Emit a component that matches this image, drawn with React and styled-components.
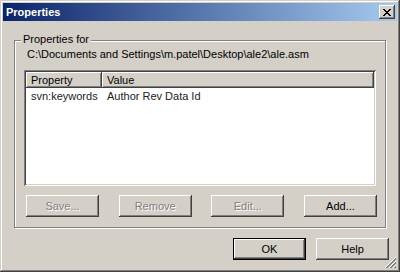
import styled, { createGlobalStyle } from 'styled-components';

const FACE = '#d4d0c8';
const SHADOW = '#808080';
const DARK = '#404040';

const GlobalStyle = createGlobalStyle`
  html, body {
    margin: 0;
    padding: 0;
    background: ${FACE};
  }
  * {
    box-sizing: border-box;
  }
`;

const Window = styled.div`
  position: relative;
  width: 400px;
  height: 272px;
  padding: 3px;
  display: flex;
  flex-direction: column;
  background: ${FACE};
  box-shadow: inset -1px -1px ${DARK}, inset 1px 1px ${FACE},
    inset -2px -2px ${SHADOW}, inset 2px 2px #fff;
  font-family: 'Liberation Sans', Arial, sans-serif;
  font-size: 11px;
  color: #000;
`;

const TitleBar = styled.div`
  height: 18px;
  display: flex;
  align-items: center;
  justify-content: space-between;
  padding: 0 2px 0 3px;
  background: linear-gradient(to right, #0a246a, #a6caf0);
`;

const Title = styled.span`
  color: #fff;
  font-weight: bold;
  font-size: 11px;
`;

const CloseButton = styled.div`
  width: 16px;
  height: 14px;
  display: flex;
  align-items: center;
  justify-content: center;
  background: ${FACE};
  box-shadow: inset -1px -1px ${DARK}, inset 1px 1px #fff,
    inset -2px -2px ${SHADOW};
`;

const Body = styled.div`
  flex: 1;
  display: flex;
  flex-direction: column;
`;

const Group = styled.div`
  position: relative;
  margin: 19px 11px 0 11px;
  height: 188px;
  padding: 7px 9px 0 9px;
  border: 1px solid ${SHADOW};
  box-shadow: inset 1px 1px #fff, 1px 1px #fff;
  display: flex;
  flex-direction: column;
`;

const Legend = styled.span`
  position: absolute;
  top: -8px;
  left: 6px;
  padding: 0 2px;
  background: ${FACE};
  line-height: 13px;
`;

const PathText = styled.div`
  margin-left: 3px;
  line-height: 13px;
  white-space: nowrap;
`;

const List = styled.div`
  margin-top: 9px;
  height: 116px;
  padding: 2px;
  background: #fff;
  box-shadow: inset 1px 1px ${SHADOW}, inset -1px -1px #fff,
    inset 2px 2px ${DARK}, inset -2px -2px ${FACE};
`;

const Row = styled.div`
  display: flex;
  height: 16px;
`;

const HeaderCell = styled.div`
  width: ${(p) => (p.$grow ? 'auto' : `${p.$width}px`)};
  flex: ${(p) => (p.$grow ? 1 : 'none')};
  display: flex;
  align-items: center;
  padding-left: 5px;
  background: ${FACE};
  box-shadow: inset -1px -1px ${DARK}, inset 1px 1px #fff,
    inset -2px -2px ${SHADOW};
`;

const Cell = styled.div`
  width: ${(p) => (p.$grow ? 'auto' : `${p.$width}px`)};
  flex: ${(p) => (p.$grow ? 1 : 'none')};
  display: flex;
  align-items: center;
  padding-left: 5px;
  color: #222;
  white-space: nowrap;
`;

const ButtonRow = styled.div`
  margin: 9px -1px 0 2px;
  display: flex;
  justify-content: space-between;
`;

const Footer = styled.div`
  margin-top: 10px;
  padding-right: 8px;
  display: flex;
  justify-content: flex-end;
  gap: 10px;
`;

const Button = styled.div`
  width: 73px;
  height: 22px;
  display: flex;
  align-items: center;
  justify-content: center;
  background: ${FACE};
  border: ${(p) => (p.$default ? '1px solid #000' : 'none')};
  box-shadow: inset -1px -1px ${DARK}, inset 1px 1px #fff,
    inset -2px -2px ${SHADOW}, inset 2px 2px ${FACE};
  color: ${(p) => (p.$disabled ? SHADOW : '#000')};
  text-shadow: ${(p) => (p.$disabled ? '1px 1px 0 #fff' : 'none')};
`;

const Grip = styled.svg`
  position: absolute;
  right: 3px;
  bottom: 3px;
`;

const App = () => {
  return (
    <>
      <GlobalStyle />
      <Window>
        <TitleBar>
          <Title>Properties</Title>
          <CloseButton>
            <svg width="8" height="7" viewBox="0 0 8 7">
              <path d="M0 0 L7 7 M1 0 L8 7 M7 0 L0 7 M8 0 L1 7" stroke="#000" strokeWidth="1" />
            </svg>
          </CloseButton>
        </TitleBar>
        <Body>
          <Group>
            <Legend>Properties for</Legend>
            <PathText>C:\Documents and Settings\m.patel\Desktop\ale2\ale.asm</PathText>
            <List>
              <Row>
                <HeaderCell $width={76}>Property</HeaderCell>
                <HeaderCell $grow>Value</HeaderCell>
              </Row>
              <Row>
                <Cell $width={76}>svn:keywords</Cell>
                <Cell $grow>Author Rev Data Id</Cell>
              </Row>
            </List>
            <ButtonRow>
              <Button $disabled>Save...</Button>
              <Button $disabled>Remove</Button>
              <Button $disabled>Edit...</Button>
              <Button>Add...</Button>
            </ButtonRow>
          </Group>
          <Footer>
            <Button $default>OK</Button>
            <Button>Help</Button>
          </Footer>
        </Body>
        <Grip width="12" height="12" viewBox="0 0 12 12">
          <path d="M11 1 L1 11 M11 5 L5 11 M11 9 L9 11" stroke={SHADOW} strokeWidth="1" />
          <path d="M11 2 L2 11 M11 6 L6 11 M11 10 L10 11" stroke={SHADOW} strokeWidth="1" />
          <path d="M11 0 L0 11 M11 4 L4 11 M11 8 L8 11" stroke="#fff" strokeWidth="1" />
        </Grip>
      </Window>
    </>
  );
};

export default App;
